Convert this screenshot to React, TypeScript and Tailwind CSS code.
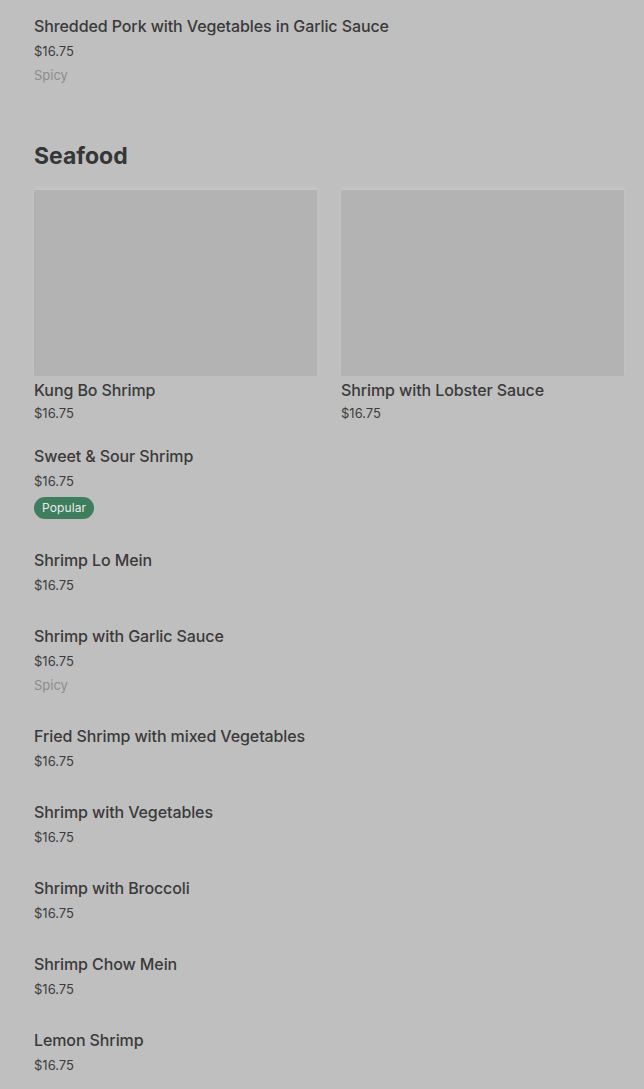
import React from "react";

type Item = { name: string; price: string; tag?: "Spicy" | "Popular" };

const list: Item[] = [
  { name: "Sweet & Sour Shrimp", price: "$16.75", tag: "Popular" },
  { name: "Shrimp Lo Mein", price: "$16.75" },
  { name: "Shrimp with Garlic Sauce", price: "$16.75", tag: "Spicy" },
  { name: "Fried Shrimp with mixed Vegetables", price: "$16.75" },
  { name: "Shrimp with Vegetables", price: "$16.75" },
  { name: "Shrimp with Broccoli", price: "$16.75" },
  { name: "Shrimp Chow Mein", price: "$16.75" },
  { name: "Lemon Shrimp", price: "$16.75" },
];

function Row({ item }: { item: Item }) {
  return (
    <div className="flex flex-col items-start">
      <div className="text-[16px] leading-[24px] font-medium tracking-[-0.1px] text-[#3a3a3a]">{item.name}</div>
      <div className="mt-[3px] text-[13px] leading-[20px] text-[#3d3d3d]">{item.price}</div>
      {item.tag === "Spicy" && (
        <div className="mt-[4px] text-[13px] leading-[20px] text-[#8c8c8c]">Spicy</div>
      )}
      {item.tag === "Popular" && (
        <div className="mt-[6px] h-[22px] px-[8px] rounded-full bg-[#3e7d5e] text-[#e6efe9] text-[12px] leading-[22px] tracking-[0.1px]">
          Popular
        </div>
      )}
    </div>
  );
}

export default function App() {
  return (
    <div
      className="min-h-[1089px] bg-[#bfbfbf] pl-[34px] pr-[20px] pt-[14px] pb-[20px]"
      style={{ fontFamily: "Inter, 'Noto Sans', sans-serif" }}
    >
      <Row item={{ name: "Shredded Pork with Vegetables in Garlic Sauce", price: "$16.75", tag: "Spicy" }} />
      <h2 className="mt-[57px] text-[23px] leading-[28px] font-bold text-[#363636]">Seafood</h2>
      <div className="mt-[20px] grid grid-cols-2 gap-[24px]">
        {["Kung Bo Shrimp", "Shrimp with Lobster Sauce"].map((n) => (
          <div key={n} className="flex flex-col">
            <div className="h-[186px] bg-[#b3b3b3] shadow-[0_-2px_4px_rgba(255,255,255,0.15)]" />
            <div className="mt-[2px] text-[16px] leading-[24px] font-medium tracking-[-0.1px] text-[#3a3a3a]">{n}</div>
            <div className="mt-[1px] text-[13px] leading-[20px] text-[#3d3d3d]">$16.75</div>
          </div>
        ))}
      </div>
      <div className="mt-[21px] flex flex-col gap-[29px]">
        {list.map((it) => (
          <Row key={it.name} item={it} />
        ))}
      </div>
    </div>
  );
}
